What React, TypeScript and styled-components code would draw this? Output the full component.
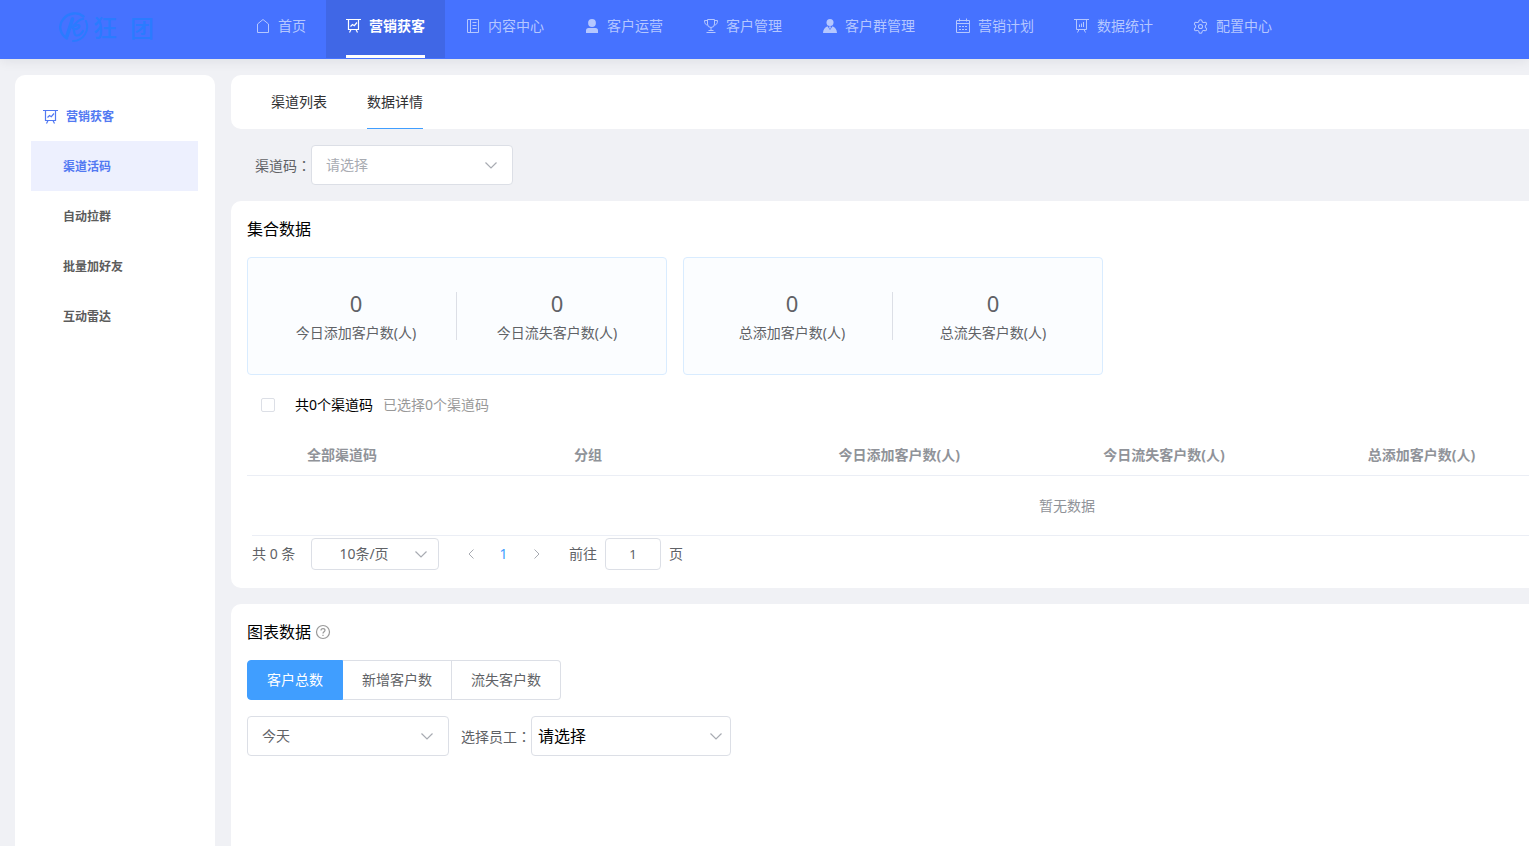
import React, { ReactNode } from 'react';
import styled, { createGlobalStyle } from 'styled-components';
import { Settings } from 'lucide-react';

const GlobalStyle = createGlobalStyle`
  * { box-sizing: border-box; }
  html, body, #root { margin: 0; padding: 0; }
  body {
    background: #f0f1f5;
    color: #606266;
    font-family: "Noto Sans", "Noto Sans CJK SC", sans-serif;
    font-size: 14px;
    line-height: 24px;
  }
  button, input, select { font: inherit; color: inherit; }
  a { color: inherit; text-decoration: none; }
  h2, p, ul, dl, dd { margin: 0; padding: 0; }
`;

const Page = styled.div`
  display: flex;
  flex-direction: column;
  min-height: 100vh;
`;

const Header = styled.header`
  display: flex;
  height: 59px;
  background: #4672ff;
  box-shadow: 0 2px 12px rgba(0, 21, 41, 0.08);
  white-space: nowrap;
`;

const Brand = styled.a`
  display: flex;
  align-items: center;
  gap: 4px;
  flex: 0 0 235px;
  height: 54px;
  padding-left: 58px;
  color: #2a7bff;
  font-size: 24px;
  font-weight: 500;
`;

const BrandName = styled.span`
  display: flex;
  gap: 13px;
  font-family: "Noto Sans CJK SC", sans-serif;
`;

const Nav = styled.nav`
  display: flex;
`;

const NavItem = styled.div<{ $active?: boolean }>`
  height: 58px;
  padding: 0 20px;
  background: ${(p) => (p.$active ? '#4067e6' : 'transparent')};
`;

const NavLink = styled.a<{ $active?: boolean }>`
  display: flex;
  align-items: center;
  gap: 8px;
  height: 58px;
  padding-bottom: 3px;
  border-bottom: 3px solid ${(p) => (p.$active ? '#fff' : 'transparent')};
  color: ${(p) => (p.$active ? '#fff' : '#b5c7ff')};
  font-weight: ${(p) => (p.$active ? 700 : 400)};
`;

const Body = styled.div`
  display: flex;
  flex: 1;
  gap: 16px;
  padding: 16px 0 0 15px;
`;

const Sidebar = styled.aside`
  flex: 0 0 200px;
  padding: 16px 17px 0 16px;
  border-radius: 10px 10px 0 0;
  background: #fff;
  font-size: 12px;
  font-weight: 700;
`;

const SideTitle = styled.h2`
  display: flex;
  align-items: center;
  gap: 8px;
  height: 50px;
  padding: 2px 0 0 12px;
  color: #5279f2;
  font-size: 12px;
`;

const SideLink = styled.a<{ $active?: boolean }>`
  display: flex;
  align-items: center;
  height: 50px;
  padding: 2px 0 0 32px;
  background: ${(p) => (p.$active ? '#edf0fe' : 'transparent')};
  color: ${(p) => (p.$active ? '#5279f2' : '#5c5c5c')};
`;

const Main = styled.main`
  display: flex;
  flex: 1;
  flex-direction: column;
  min-width: 0;
`;

const Tabs = styled.nav`
  display: flex;
  gap: 40px;
  height: 54px;
  padding-left: 40px;
  border-radius: 10px 0 0 10px;
  background: #fff;
`;

const Tab = styled.a<{ $active?: boolean }>`
  height: 54px;
  border-bottom: 1px solid ${(p) => (p.$active ? '#409eff' : 'transparent')};
  color: #303133;
  line-height: 54px;
`;

const FilterBar = styled.div`
  display: flex;
  align-items: center;
  padding: 16px 24px;
`;

const FieldLabel = styled.label`
  font-family: "Noto Sans CJK SC", sans-serif;
`;

/* The Traditional Chinese face centres the full-width colon in its cell. */
const Colon = styled.span`
  font-family: "Noto Sans CJK TC", sans-serif;
`;

const Card = styled.section<{ $grow?: boolean }>`
  flex: ${(p) => (p.$grow ? '1' : 'none')};
  padding: 16px 0 18px 16px;
  border-radius: ${(p) => (p.$grow ? '10px 0 0 0' : '10px 0 0 10px')};
  background: #fff;

  & + & { margin-top: 16px; }
`;

const CardTitle = styled.h2`
  display: flex;
  align-items: center;
  gap: 4px;
  height: 24px;
  margin-bottom: 16px;
  color: #000;
  font-size: 16px;
  font-weight: 400;
`;

const SelectBox = styled.span<{ $width: number }>`
  position: relative;
  display: inline-flex;
  width: ${(p) => p.$width}px;
`;

type Look = 'normal' | 'placeholder' | 'small' | 'large';

const lookColor: Record<Look, string> = {
  normal: '#606266',
  placeholder: '#a8abb2',
  small: '#606266',
  large: '#000',
};

const Select = styled.select<{ $look: Look }>`
  width: 100%;
  height: ${(p) => (p.$look === 'small' ? 32 : 40)}px;
  padding: ${(p) => (p.$look === 'small' ? '0 29px 0 7px' : p.$look === 'large' ? '0 30px 0 6px' : '0 30px 0 14px')};
  border: 1px solid #dcdfe6;
  border-radius: 4px;
  appearance: none;
  background: #fff;
  color: ${(p) => lookColor[p.$look]};
  font-size: ${(p) => (p.$look === 'large' ? 16 : 14)}px;
  text-align-last: ${(p) => (p.$look === 'small' ? 'center' : 'left')};
`;

const SelectArrow = styled.svg<{ $right: number }>`
  position: absolute;
  top: 50%;
  right: ${(p) => p.$right}px;
  margin-top: -6px;
  pointer-events: none;
`;

const Stats = styled.div`
  display: flex;
  gap: 16px;
`;

const StatGroup = styled.dl`
  display: flex;
  align-items: center;
  width: 420px;
  height: 118px;
  padding: 0 9px 0 8px;
  border: 1px solid #d9ecff;
  border-radius: 4px;
  background: #fbfdff;
`;

const Divider = styled.div`
  width: 1px;
  height: 48px;
  background: #dcdfe6;
`;

const Stat = styled.div`
  display: flex;
  flex: 1;
  flex-direction: column-reverse;
  gap: 2px;
  text-align: center;
`;

const StatValue = styled.dd`
  font-size: 22px;
  line-height: 32px;
`;

const Selection = styled.div`
  display: flex;
  align-items: center;
  height: 60px;
  padding-left: 14px;
`;

const CheckLabel = styled.label`
  display: flex;
  align-items: center;
  gap: 20px;
  margin-right: 10px;
  color: #000;
`;

const Checkbox = styled.input`
  width: 14px;
  height: 14px;
  margin: 0;
  border: 1px solid #dcdfe6;
  border-radius: 2px;
  appearance: none;
  background: #fff;
`;

const Muted = styled.span`
  color: #999;
`;

const TableScroll = styled.div`
  overflow-x: auto;
  scrollbar-width: none;
`;

const Table = styled.table`
  width: 100%;
  min-width: 1640px;
  border-collapse: separate;
  border-spacing: 0;
  table-layout: fixed;
  color: #909399;
`;

const HeadCell = styled.th<{ $width?: number }>`
  width: ${(p) => (p.$width ? `${p.$width}px` : 'auto')};
  height: 41px;
  padding: 0 10px;
  border-bottom: 1px solid #ebeef5;
  text-align: left;
`;

const EmptyCell = styled.td`
  height: 59px;
  padding: 0;
  text-align: center;
`;

const Pagination = styled.div`
  display: flex;
  align-items: center;
  height: 35px;
  margin-left: 5px;
  padding-top: 2px;
  border-top: 1px solid #ebeef5;
`;

const PageTotal = styled.span`
  width: 59px;
`;

const Pager = styled.div`
  display: flex;
  margin: 0 16px 0 15px;
`;

const PageButton = styled.button<{ $current?: boolean }>`
  display: flex;
  align-items: center;
  justify-content: center;
  width: 33px;
  height: 32px;
  padding: 0;
  border: 0;
  background: none;
  color: ${(p) => (p.$current ? '#409eff' : '#a8abb2')};
`;

const JumpLabel = styled.label`
  display: flex;
  align-items: center;
  gap: 8px;
`;

const JumpInput = styled.input`
  width: 56px;
  height: 32px;
  padding: 0;
  border: 1px solid #dcdfe6;
  border-radius: 4px;
  font-size: 13px;
  text-align: center;
`;

const ButtonGroup = styled.div`
  display: flex;
  margin-bottom: 16px;
`;

const GroupButton = styled.button<{ $active?: boolean }>`
  height: 40px;
  padding: 0 19px;
  border: 1px solid ${(p) => (p.$active ? '#409eff' : '#dcdfe6')};
  border-left-width: ${(p) => (p.$active ? 1 : 0)}px;
  background: ${(p) => (p.$active ? '#409eff' : '#fff')};
  color: ${(p) => (p.$active ? '#fff' : '#606266')};

  &:first-child { border-radius: 4px 0 0 4px; }
  &:last-child { border-radius: 0 4px 4px 0; }
`;

const ChartFilters = styled.div`
  display: flex;
  align-items: center;
  gap: 12px;
`;

const Field = styled.div`
  display: flex;
  align-items: center;
`;

const Icon = ({ children }: { children: ReactNode }) => (
  <svg width="15" height="16" viewBox="0 0 15 16" fill="none" stroke="currentColor" aria-hidden="true">
    {children}
  </svg>
);

const HomeIcon = () => <Icon><path d="M2.5 6 8 1.500 13.500 6v8.500h-11z" /></Icon>;
const BoardIcon = () => (
  <Icon>
    <path d="M0 1.500h15M2.500 1.500v10h10v-10" strokeWidth="1.200" />
    <path d="M5 11.500l-1.500 3M10 11.500l1.500 3M4.500 8.500l2-2 1.800 1.200L11 4.500" strokeWidth="1.200" />
  </Icon>
);
const NotebookIcon = () => (
  <Icon><path d="M2.500 1.500h11v13h-11zM5.500 1.500v13M7.500 4.500h4M7.500 7.500h4M7.500 10.500h4" /></Icon>
);
const UserIcon = () => (
  <Icon>
    <g fill="currentColor" stroke="none">
      <circle cx="8" cy="5" r="3.900" />
      <path d="M2 15v-2.500q0-2.500 2.500-2.500h7q2.500 0 2.500 2.500V15z" />
    </g>
  </Icon>
);
const TrophyIcon = () => (
  <Icon>
    <path d="M4.500 1.500h7V6a3.500 3.500 0 0 1-7 0zM4.500 2.500h-3c0 3 1 4.500 3.300 4.500M11.500 2.500h3c0 3-1 4.500-3.300 4.500M8 9.500v3M5.500 12.500h5M3.500 14.500h9" />
  </Icon>
);
const GroupIcon = () => (
  <Icon>
    <g fill="currentColor" stroke="none">
      <circle cx="8" cy="4.500" r="3.500" />
      <path d="M1 15c.2-3.500 1.800-6 4.500-6.800L8 12l2.500-3.800c2.700.8 4.300 3.300 4.500 6.800z" />
      <path d="m8 8 1 1-1 2.200L7 9z" />
    </g>
  </Icon>
);
const CalendarIcon = () => (
  <Icon>
    <path d="M1.500 2.500h13v12h-13zM1.500 5.500h13M4.500.5v3M11.500.5v3M4 8.500h2M7 8.500h2M10 8.500h2M4 11.500h2M7 11.500h2M10 11.500h2" />
  </Icon>
);
const ChartIcon = () => (
  <Icon>
    <path d="M0 1.500h15M2.500 1.500v10h10v-10M5 11.500l-1.500 3M10 11.500l1.500 3M5.500 6.500v2.500M7.500 5.500v3.500M9.500 4v5" />
  </Icon>
);

const Logo = () => (
  <svg width="31" height="32" viewBox="0 0 31 32" fill="none" stroke="currentColor" strokeLinecap="round" aria-hidden="true">
    <path d="M9 27.500C2 23.500 0 14 5 8.500 10 1.500 20 .5 25.500 5.500" strokeWidth="2.400" />
    <path d="M28 10c4 10-3 20-13 20" strokeWidth="2" />
    <path d="M14.500 8 9 25" strokeWidth="3.600" />
    <path d="M25 8c-4 0-7.500 4-11.500 9 4-3 8.500-4 8-1.500-.5 2.500-4.500 3-6 2.500 1 3 .5 6.300 3 6.500 2.500.2 5-2 6.500-4.500" strokeWidth="2.200" />
  </svg>
);

const Chevron = ({ right }: { right: number }) => (
  <SelectArrow $right={right} width="12" height="12" viewBox="0 0 12 12" fill="none" stroke="#a8abb2" strokeWidth="1.200" aria-hidden="true">
    <path d="m.5 3.500 5.500 5.500 5.500-5.500" />
  </SelectArrow>
);

const QuestionIcon = () => (
  <svg width="16" height="16" viewBox="0 0 16 16" fill="none" stroke="#999" role="img" aria-label="说明">
    <circle cx="8" cy="8" r="6.500" strokeWidth="1.200" />
    <path d="M6 6.500c0-2.700 4-2.500 4-.2C10 7.800 8 7.800 8 9.500M8 10.800v1.200" strokeWidth="1.200" />
  </svg>
);

const navItems: { label: string; icon: ReactNode; active?: boolean }[] = [
  { label: '首页', icon: <HomeIcon /> },
  { label: '营销获客', icon: <BoardIcon />, active: true },
  { label: '内容中心', icon: <NotebookIcon /> },
  { label: '客户运营', icon: <UserIcon /> },
  { label: '客户管理', icon: <TrophyIcon /> },
  { label: '客户群管理', icon: <GroupIcon /> },
  { label: '营销计划', icon: <CalendarIcon /> },
  { label: '数据统计', icon: <ChartIcon /> },
  { label: '配置中心', icon: <Settings size={15} viewBox="1 1 22 22" strokeWidth={1.5} /> },
];

const sideItems = ['渠道活码', '自动拉群', '批量加好友', '互动雷达'];

const statGroups = [
  ['今日添加客户数(人)', '今日流失客户数(人)'],
  ['总添加客户数(人)', '总流失客户数(人)'],
];

const columns: { name: string; width?: number }[] = [
  { name: '', width: 50 },
  { name: '全部渠道码', width: 267 },
  { name: '分组' },
  { name: '今日添加客户数(人)' },
  { name: '今日流失客户数(人)' },
  { name: '总添加客户数(人)' },
  { name: '' },
];

export default function App() {
  return (
    <Page>
      <GlobalStyle />
      <Header>
        <Brand href="#">
          <Logo />
          <BrandName><span>狂</span><span>团</span></BrandName>
        </Brand>
        <Nav>
          {navItems.map((item) => (
            <NavItem key={item.label} $active={item.active}>
              <NavLink href="#" $active={item.active}>{item.icon}{item.label}</NavLink>
            </NavItem>
          ))}
        </Nav>
      </Header>
      <Body>
        <Sidebar>
          <SideTitle><BoardIcon />营销获客</SideTitle>
          <nav>
            {sideItems.map((label, i) => (
              <SideLink key={label} href="#" $active={i === 0}>{label}</SideLink>
            ))}
          </nav>
        </Sidebar>
        <Main>
          <Tabs>
            <Tab href="#">渠道列表</Tab>
            <Tab href="#" $active>数据详情</Tab>
          </Tabs>
          <FilterBar>
            <FieldLabel htmlFor="channel">渠道码<Colon>：</Colon></FieldLabel>
            <SelectBox $width={202}>
              <Select id="channel" $look="placeholder"><option>请选择</option></Select>
              <Chevron right={16} />
            </SelectBox>
          </FilterBar>

          <Card>
            <CardTitle>集合数据</CardTitle>
            <Stats>
              {statGroups.map(([added, lost]) => (
                <StatGroup key={added}>
                  <Stat><dt>{added}</dt><StatValue>0</StatValue></Stat>
                  <Divider />
                  <Stat><dt>{lost}</dt><StatValue>0</StatValue></Stat>
                </StatGroup>
              ))}
            </Stats>
            <Selection>
              <CheckLabel><Checkbox type="checkbox" />共0个渠道码</CheckLabel>
              <Muted>已选择0个渠道码</Muted>
            </Selection>
            <TableScroll>
              <Table>
                <thead>
                  <tr>
                    {columns.map((col, i) => <HeadCell key={i} $width={col.width}>{col.name}</HeadCell>)}
                  </tr>
                </thead>
                <tbody>
                  <tr><EmptyCell colSpan={columns.length}>暂无数据</EmptyCell></tr>
                </tbody>
              </Table>
            </TableScroll>
            <Pagination>
              <PageTotal>共 0 条</PageTotal>
              <SelectBox $width={128}>
                <Select $look="small" aria-label="每页条数"><option>10条/页</option></Select>
                <Chevron right={12} />
              </SelectBox>
              <Pager>
                <PageButton type="button" aria-label="上一页">
                  <svg width="12" height="12" viewBox="0 0 12 12" fill="none" stroke="currentColor"><path d="M8.500 1.500 4 6l4.500 4.500" /></svg>
                </PageButton>
                <PageButton type="button" $current>1</PageButton>
                <PageButton type="button" aria-label="下一页">
                  <svg width="12" height="12" viewBox="0 0 12 12" fill="none" stroke="currentColor"><path d="M3.500 1.500 8 6l-4.500 4.500" /></svg>
                </PageButton>
              </Pager>
              <JumpLabel>前往<JumpInput type="text" defaultValue="1" />页</JumpLabel>
            </Pagination>
          </Card>

          <Card $grow>
            <CardTitle>图表数据<QuestionIcon /></CardTitle>
            <ButtonGroup>
              <GroupButton type="button" $active>客户总数</GroupButton>
              <GroupButton type="button">新增客户数</GroupButton>
              <GroupButton type="button">流失客户数</GroupButton>
            </ButtonGroup>
            <ChartFilters>
              <SelectBox $width={202}>
                <Select $look="normal" aria-label="日期"><option>今天</option></Select>
                <Chevron right={16} />
              </SelectBox>
              <Field>
                <FieldLabel htmlFor="staff">选择员工<Colon>：</Colon></FieldLabel>
                <SelectBox $width={200}>
                  <Select id="staff" $look="large"><option>请选择</option></Select>
                  <Chevron right={9} />
                </SelectBox>
              </Field>
            </ChartFilters>
          </Card>
        </Main>
      </Body>
    </Page>
  );
}
